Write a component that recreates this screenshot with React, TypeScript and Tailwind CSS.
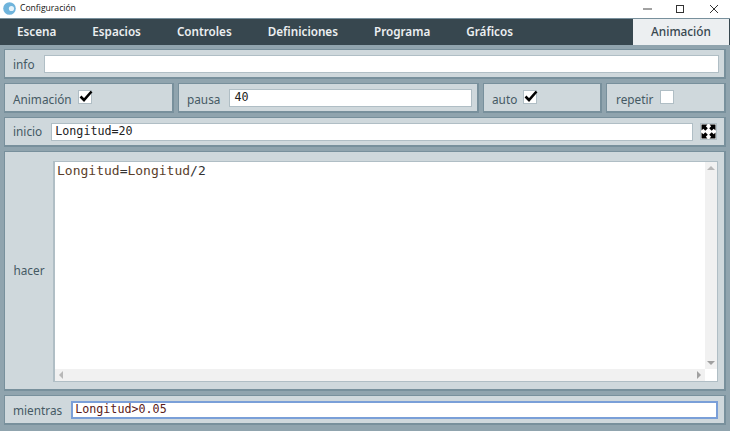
import React from "react";

const Panel = ({ className = "", children }: { className?: string; children: React.ReactNode }) => (
  <div className={`flex items-center bg-[#cfd8dc] border border-[#78909c] border-b-2 border-r-2 ${className}`}>{children}</div>
);

const Field = ({ value, className = "", color = "text-[#222]" }: { value?: string; className?: string; color?: string }) => (
  <div className={`h-[18px] bg-white border border-[#b0bec5] flex items-center pl-[4px] font-['DejaVu_Sans_Mono',monospace] text-[11.7px] leading-none ${color} ${className}`}>{value}</div>
);

const Check = ({ checked }: { checked?: boolean }) => (
  <div className="w-[14px] h-[14px] bg-white border border-[#b0bec5] relative">
    {checked && (
      <svg viewBox="0 0 14 14" className="absolute left-[0px] top-[-2px] w-[14px] h-[14px]">
        <path d="M1.5 7.5 L5 11 L12.5 2.5" fill="none" stroke="#000" strokeWidth="2.6" />
      </svg>
    )}
  </div>
);

const Label = ({ children, className = "" }: { children: React.ReactNode; className?: string }) => (
  <span className={`text-[#455a64] text-[11.8px] ${className}`}>{children}</span>
);

const tabs = ["Escena", "Espacios", "Controles", "Definiciones", "Programa", "Gráficos"];

export default function App() {
  return (
    <div className="w-[730px] h-[431px] flex flex-col overflow-hidden bg-[#90a4ae] font-['Noto_Sans','Open_Sans',sans-serif]">
      <div className="h-[18px] bg-white flex items-center shrink-0">
        <svg viewBox="0 0 12 12" className="w-[13px] h-[13px] ml-[3px] mb-[2px]">
          <circle cx="6" cy="6" r="5.8" fill="#6fb4dc" />
          <circle cx="7.8" cy="6" r="2.4" fill="#e6f3fa" />
        </svg>
        <span className="ml-[4px] mb-[1px] text-[8.6px] text-[#111] font-['Open_Sans',sans-serif]">Configuración</span>
        <div className="ml-auto flex items-center mr-[12px] gap-[24px] mb-[1px]">
          <svg viewBox="0 0 9 9" className="w-[9px] h-[9px]"><path d="M0 5h9" stroke="#444" strokeWidth="1" /></svg>
          <svg viewBox="0 0 8 8" className="w-[8px] h-[8px]"><rect x="0.5" y="0.5" width="7" height="7" fill="none" stroke="#333" /></svg>
          <svg viewBox="0 0 8 8" className="w-[8px] h-[8px] ml-[2px]"><path d="M0 0l8 8M8 0l-8 8" stroke="#333" strokeWidth="1" /></svg>
        </div>
      </div>
      <div className="h-[27px] shrink-0 bg-[#37474f] flex items-stretch border-t border-[#78909c]">
        <div className="flex items-center gap-[36px] pl-[17px]">
          {tabs.map((t) => (
            <div key={t} className="text-[11.7px] font-semibold text-[#eceff1]">{t}</div>
          ))}
        </div>
        <div className="ml-auto mr-[1px] w-[96px] bg-[#eceff1] flex items-center justify-center text-[11.8px] text-[#37474f] font-medium">Animación</div>
      </div>
      <div className="flex-1 min-h-0 flex flex-col gap-[4px] px-[4px] pt-[4px] pb-[6px]">
        <Panel className="h-[30px] shrink-0 pl-[8px] pr-[5px]">
          <Label className="pt-[2px]">info</Label>
          <Field className="flex-1 ml-[9px]" />
        </Panel>
        <div className="h-[30px] shrink-0 flex gap-[4px]">
          <Panel className="w-[170px] pl-[8px]">
            <Label className="pt-[4px]">Animación</Label>
            <div className="ml-[6px] mb-[1px]"><Check checked /></div>
          </Panel>
          <Panel className="w-[301px] pl-[8px]">
            <Label className="pt-[4px]">pausa</Label>
            <Field value="40" className="w-[243px] ml-[9px]" />
          </Panel>
          <Panel className="w-[119px] pl-[8px]">
            <Label className="pt-[4px]">auto</Label>
            <div className="ml-[6px] mb-[1px]"><Check checked /></div>
          </Panel>
          <Panel className="flex-1 pl-[9px]">
            <Label className="pt-[4px]">repetir</Label>
            <div className="ml-[7px] mb-[1px]"><Check /></div>
          </Panel>
        </div>
        <Panel className="h-[30px] shrink-0 pl-[8px] pr-[7px]">
          <Label className="pt-[1px]">inicio</Label>
          <Field className="flex-1 ml-[9px] !pl-[3px]" value="Longitud=20" />
          <svg viewBox="1 1 15 15" className="w-[17px] h-[17px] ml-[7px] bg-white border border-[#b0bec5] shrink-0">
            <path d="M1.5 1.5h6L5.8 3.3 7.8 5.3 5.3 7.8 3.3 5.8 1.5 7.5zM15.5 1.5v6L13.7 5.8 11.7 7.8 9.2 5.3 11.2 3.3 9.5 1.5zM1.5 15.5v-6L3.3 11.2 5.3 9.2 7.8 11.7 5.8 13.7 7.5 15.5zM15.5 15.5h-6L11.2 13.7 9.2 11.7 11.7 9.2 13.7 11.2 15.5 9.5z" fill="#000" />
          </svg>
        </Panel>
        <Panel className="flex-1 min-h-0 items-stretch pr-[6px] pt-[9px] pb-[7px]">
          <div className="w-[48px] shrink-0 flex items-center justify-center"><Label className="pb-[1px]">hacer</Label></div>
          <div className="flex-1 min-w-0 flex flex-col bg-white border-l-2 border-t border-r border-b border-[#b0bec5]">
            <div className="flex-1 min-h-0 flex">
              <div className="flex-1 pl-[2px] pt-[1px] font-['DejaVu_Sans_Mono',monospace] text-[13px] leading-[16px] text-[#5a3e2b]">
                Longitud<span className="text-[#333]">=</span>Longitud<span className="text-[#333]">/2</span>
              </div>
              <div className="w-[12px] bg-[#f1f1f1] flex flex-col items-center justify-between py-[4px]">
                <div className="w-0 h-0 border-x-[4px] border-x-transparent border-b-[4px] border-b-[#b8b8b8]" />
                <div className="w-0 h-0 border-x-[4px] border-x-transparent border-t-[4px] border-t-[#a0a0a0]" />
              </div>
            </div>
            <div className="h-[12px] shrink-0 flex">
              <div className="flex-1 bg-[#f1f1f1] flex items-center justify-between px-[4px]">
                <div className="w-0 h-0 border-y-[4px] border-y-transparent border-r-[4px] border-r-[#b8b8b8]" />
                <div className="w-0 h-0 border-y-[4px] border-y-transparent border-l-[4px] border-l-[#a0a0a0]" />
              </div>
              <div className="w-[12px]" />
            </div>
          </div>
        </Panel>
        <Panel className="h-[30px] shrink-0 pl-[8px] pr-[6px]">
          <Label className="pt-[2px]">mientras</Label>
          <Field className="flex-1 ml-[9px] !border-[#7a9fd8] border-2 !pl-[2px] pt-[1px]" value="Longitud>0.05" color="text-[#5a1a1a]" />
        </Panel>
      </div>
    </div>
  );
}
